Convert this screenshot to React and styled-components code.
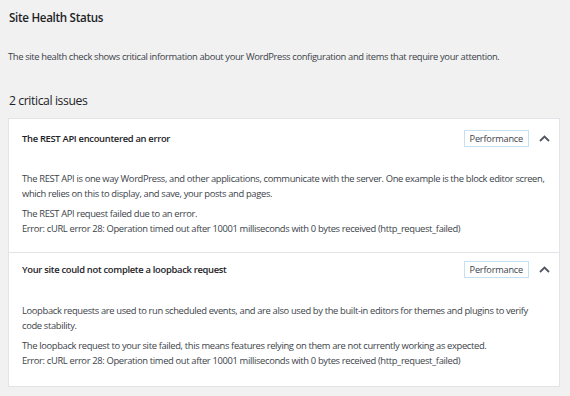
import React from "react";
import styled, { createGlobalStyle } from "styled-components";

const GlobalStyle = createGlobalStyle`
  html, body {
    margin: 0;
    padding: 0;
    background: #f1f1f1;
  }
  body {
    font-family: "Open Sans", "Noto Sans", sans-serif;
    color: #3c434a;
  }
`;

const Page = styled.div`
  width: 570px;
  height: 396px;
  box-sizing: border-box;
  padding: 9px 10px 0 8px;
  overflow: hidden;
`;

const Title = styled.h1`
  margin: 0 0 0 1px;
  font-size: 11.6px;
  line-height: 17px;
  font-weight: 600;
  letter-spacing: -0.3px;
  color: #1d2327;
`;

const Intro = styled.p`
  margin: 24px 0 0 0;
  font-size: 9.4px;
  line-height: 14px;
  letter-spacing: -0.36px;
  color: #3c434a;
`;

const IssuesHeading = styled.h2`
  margin: 28px 0 0 1px;
  font-size: 12.2px;
  line-height: 18px;
  font-weight: 400;
  letter-spacing: -0.4px;
  color: #1d2327;
`;

const Card = styled.div`
  margin-top: 8px;
  background: #fff;
  border: 1px solid #e2e4e7;
  width: 552px;
  box-sizing: border-box;
`;

const Item = styled.section`
  & + & {
    border-top: 1px solid #e2e4e7;
  }
`;

const ItemHeader = styled.div`
  display: flex;
  align-items: center;
  padding: ${(p) => p.$top}px 5px 0 13px;
  height: 18px;
`;

const ItemTitle = styled.h3`
  flex: 1;
  margin: 0;
  font-size: 9.4px;
  font-weight: 600;
  letter-spacing: -0.3px;
  color: #1d2327;
`;

const Badge = styled.span`
  border: 1px solid #c5e0f3;
  padding: 2px 5px;
  font-size: 9.2px;
  line-height: 11px;
  letter-spacing: -0.2px;
  color: #3c434a;
`;

const Toggle = styled.span`
  display: flex;
  width: 20px;
  margin-left: 5px;
  justify-content: center;
`;

const ItemBody = styled.div`
  padding: ${(p) => p.$top}px 14px ${(p) => p.$bottom}px 13px;
`;

const Para = styled.p`
  margin: 0 0 5px 0;
  font-size: 9.4px;
  line-height: 15px;
  letter-spacing: -0.35px;
  color: #3c434a;
`;

const Chevron = () => (
  <svg width="11" height="7" viewBox="0 0 11 7" fill="none">
    <path d="M1 6 L5.5 1.5 L10 6" stroke="#50575e" strokeWidth="1.8" />
  </svg>
);

const issues = [
  {
    title: "The REST API encountered an error",
    headTop: 10,
    top: 24,
    bottom: 11,
    paras: [
      "The REST API is one way WordPress, and other applications, communicate with the server. One example is the block editor screen, which relies on this to display, and save, your posts and pages.",
      [
        "The REST API request failed due to an error.",
        "Error: cURL error 28: Operation timed out after 10001 milliseconds with 0 bytes received (http_request_failed)",
      ],
    ],
  },
  {
    title: "Your site could not complete a loopback request",
    headTop: 7,
    top: 25,
    bottom: 13,
    paras: [
      "Loopback requests are used to run scheduled events, and are also used by the built-in editors for themes and plugins to verify code stability.",
      [
        "The loopback request to your site failed, this means features relying on them are not currently working as expected.",
        "Error: cURL error 28: Operation timed out after 10001 milliseconds with 0 bytes received (http_request_failed)",
      ],
    ],
  },
];

export default function App() {
  return (
    <Page>
      <GlobalStyle />
      <Title>Site Health Status</Title>
      <Intro>
        The site health check shows critical information about your WordPress
        configuration and items that require your attention.
      </Intro>
      <IssuesHeading>2 critical issues</IssuesHeading>
      <Card>
        {issues.map((issue) => (
          <Item key={issue.title}>
            <ItemHeader $top={issue.headTop}>
              <ItemTitle>{issue.title}</ItemTitle>
              <Badge>Performance</Badge>
              <Toggle>
                <Chevron />
              </Toggle>
            </ItemHeader>
            <ItemBody $top={issue.top} $bottom={issue.bottom}>
              {issue.paras.map((p, i) =>
                Array.isArray(p) ? (
                  <Para key={i}>
                    {p[0]}
                    <br />
                    {p[1]}
                  </Para>
                ) : (
                  <Para key={i}>{p}</Para>
                )
              )}
            </ItemBody>
          </Item>
        ))}
      </Card>
    </Page>
  );
}
